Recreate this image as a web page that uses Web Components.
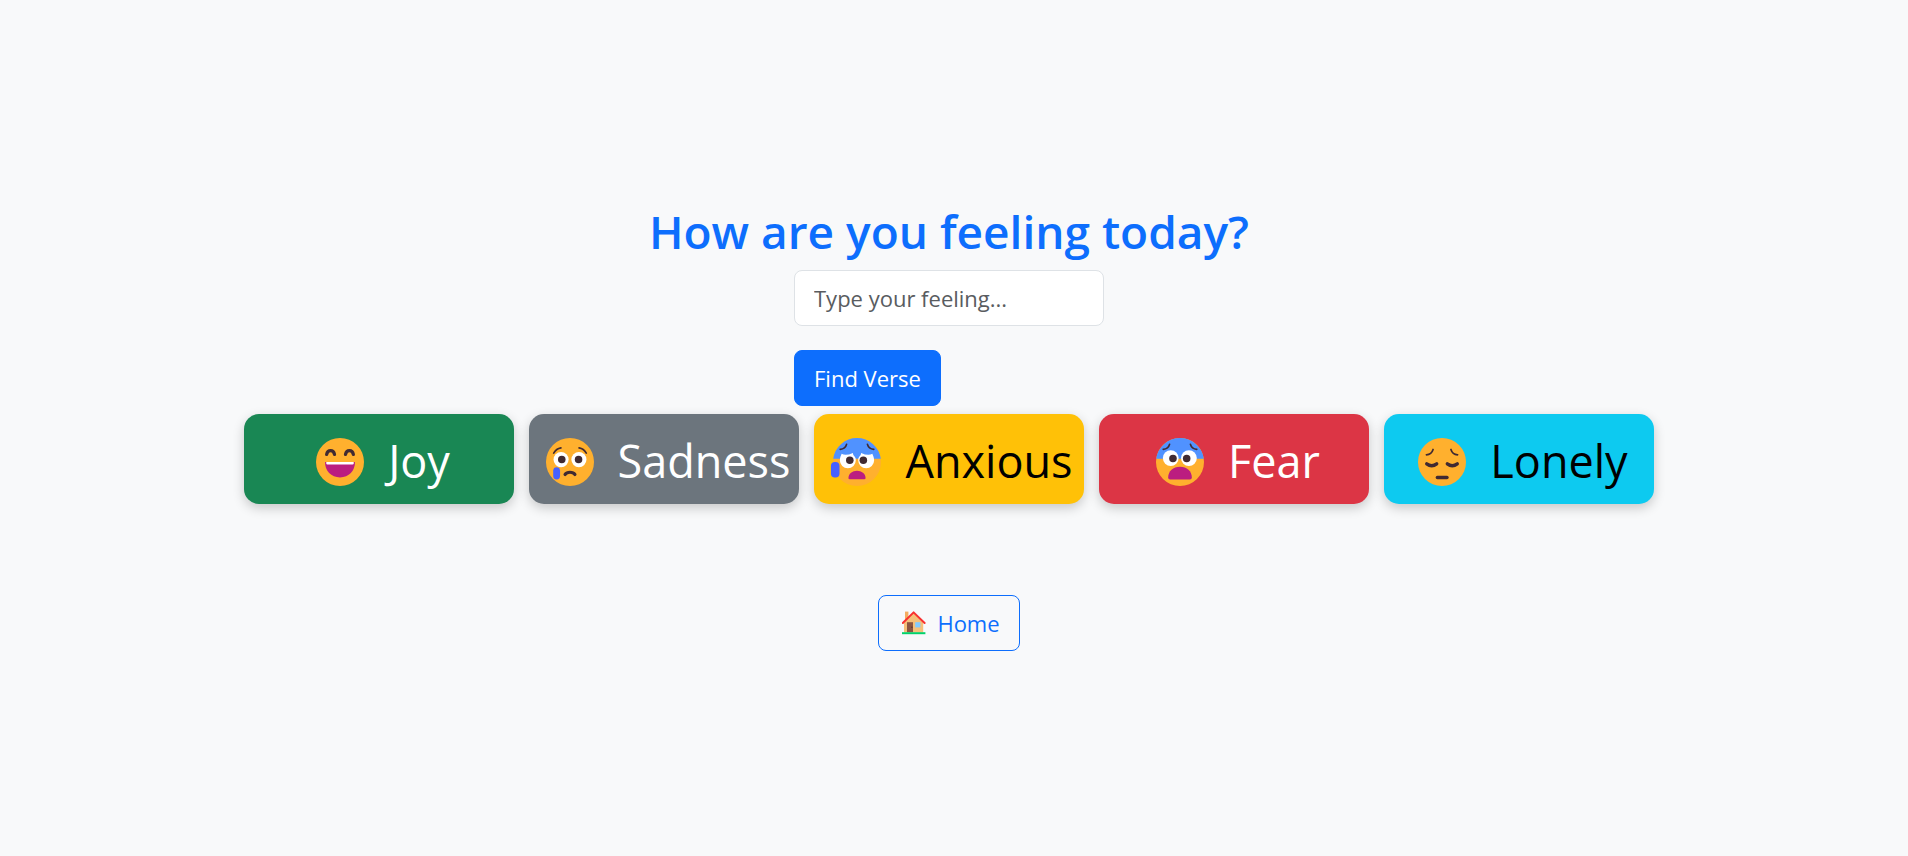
<!DOCTYPE html>
<html lang="en">
<head>
<meta charset="utf-8">
<meta name="viewport" content="width=device-width, initial-scale=1">
<title>How are you feeling today?</title>
<style>
  body {
    margin: 0;
    background: #f8f9fa;
    font-family: "Open Sans", "Noto Sans", sans-serif;
    font-size: 22px;
    line-height: 36px;
    color: #212529;
  }
</style>
</head>
<body>
<feeling-page>
  <feeling-form></feeling-form>
  <mood-list slot="moods">
    <mood-button mood="joy">Joy</mood-button>
    <mood-button mood="sadness">Sadness</mood-button>
    <mood-button mood="anxious">Anxious</mood-button>
    <mood-button mood="fear">Fear</mood-button>
    <mood-button mood="lonely">Lonely</mood-button>
  </mood-list>
  <home-link slot="footer">Home</home-link>
</feeling-page>

<script>
const define = (name, html, setup) => {
  const template = document.createElement('template');
  template.innerHTML = html;
  customElements.define(name, class extends HTMLElement {
    constructor() {
      super();
      this.attachShadow({ mode: 'open' }).append(template.content.cloneNode(true));
    }
    connectedCallback() { if (setup) setup(this, this.shadowRoot); }
  });
};

define('feeling-page', `
  <style>
    :host { display: block; }
    main {
      box-sizing: border-box;
      min-height: 100vh;
      padding-right: 10px;
      display: flex;
      flex-direction: column;
      align-items: center;
      justify-content: center;
    }
    h1 {
      margin: 0 0 12px;
      font-size: 46px;
      line-height: 54px;
      font-weight: 600;
      color: #0d6efd;
      text-align: center;
    }
    .moods { margin: 8px 0 91px; }
    .footer { padding-bottom: 1px; }
  </style>
  <main>
    <h1>How are you feeling today?</h1>
    <slot></slot>
    <div class="moods"><slot name="moods"></slot></div>
    <div class="footer"><slot name="footer"></slot></div>
  </main>`);

define('feeling-form', `
  <style>
    :host { display: block; width: 310px; max-width: 100%; }
    form { display: flex; flex-direction: column; align-items: flex-start; gap: 24px; }
    input, button {
      box-sizing: border-box;
      height: 56px;
      margin: 0;
      padding: 0 19px;
      border: 1px solid #dee2e6;
      border-radius: 8px;
      font: inherit;
    }
    input { width: 100%; background: #fff; color: #212529; }
    input::placeholder { color: #595c5f; opacity: 1; }
    button { background: #0d6efd; border-color: #0d6efd; color: #fff; cursor: pointer; }
  </style>
  <form>
    <input type="text" name="feeling" placeholder="Type your feeling..." aria-label="Your feeling">
    <button type="submit">Find Verse</button>
  </form>`, (host, root) => {
  root.querySelector('form').addEventListener('submit', e => e.preventDefault());
});

define('mood-list', `
  <style>
    :host { display: flex; flex-wrap: wrap; justify-content: center; gap: 15px; }
  </style>
  <slot></slot>`);

const face = '<circle cx="16" cy="16" r="14" fill="#ffb02e"/>';
const cold = face + '<path d="M2.13 14.1A14 14 0 0 1 29.87 14.1z" fill="#5092ff"/>';
const line = (d, w) => `<path d="${d}" fill="none" stroke="#402a32" stroke-width="${w}" stroke-linecap="round"/>`;
const faces = {
  joy: face +
    line('M8.2 11.6C8.8 8.7 12.2 8.7 12.8 11.6M19.2 11.6C19.8 8.7 23.2 8.7 23.8 11.6', 1.9) +
    '<path d="M7.3 16h17.4c.2 5-3.6 9-8.7 9s-8.9-4-8.7-9z" fill="#bb1d80"/>' +
    '<path d="M8 16h16v.8q0 .7-.7.7H8.7q-.7 0-.7-.7z" fill="#fff"/>',
  sadness: face +
    line('M6.5 10.8Q8 8.2 10.7 7.8M21.3 7.8Q24 8.2 25.5 10.8', 1) +
    '<g fill="#fff"><circle cx="10.8" cy="14.6" r="4.4"/><circle cx="21.2" cy="14.6" r="4.4"/></g>' +
    '<g fill="#402a32"><circle cx="11.2" cy="14.6" r="2.2"/><circle cx="21" cy="14.6" r="2.2"/></g>' +
    line('M13.1 23.3C14.3 21.6 17.7 21.6 18.9 23.3', 1.8) +
    '<path d="M6.2 21Q6.3 19 8.2 19T10.2 21V24Q10.2 26.2 8.2 26.2T6.2 24z" fill="#4660ff"/>',
  anxious: cold +
    line('M6.2 8.6Q9.2 8.4 9.9 5.7M22.1 5.7Q22.8 8.4 25.8 8.6', 1) +
    '<path d="M6 15C6 13 7 11.7 7 11.2Q9.5 12.6 13.6 10.7Q13.6 12 14.7 13Q15.4 13.8 15.3 15A4.6 4.6 0 0 1 6 15zM26 15C26 13 25 11.7 25 11.2Q22.5 12.6 18.4 10.7Q18.4 12 17.3 13Q16.6 13.8 16.7 15A4.6 4.6 0 0 0 26 15z" fill="#fff"/>' +
    '<g fill="#402a32"><circle cx="11.8" cy="15" r="2.2"/><circle cx="19.7" cy="15" r="2.2"/></g>' +
    '<path d="M11 25.3C11 22.8 13.4 21.1 16 21.1S21 22.8 21 25.3Q21 26.1 20.2 26.1H11.8Q11 26.1 11 25.3z" fill="#bb1d80"/>' +
    '<rect x=".8" y="16" width="5" height="9" rx="2.3" fill="#4660ff"/>',
  fear: cold +
    line('M6.2 8.6Q9.2 8.4 9.9 5.7M22.1 5.7Q22.8 8.4 25.8 8.6', 1) +
    '<g fill="#fff"><circle cx="10.6" cy="13.7" r="4.6"/><circle cx="21.2" cy="13.7" r="4.6"/></g>' +
    '<g fill="#402a32"><circle cx="11.9" cy="14" r="2.2"/><circle cx="19.9" cy="14" r="2.2"/></g>' +
    '<path d="M9.1 25C9.1 21.3 12 18.7 16 18.7S22.9 21.3 22.9 25Q22.9 26.2 21.8 26.2H10.2Q9.1 26.2 9.1 25z" fill="#bb1d80"/>',
  lonely: face +
    line('M6.9 11.8Q9.9 11.6 10.8 8.7M21.2 8.7Q22.1 11.6 25.1 11.8', 1) +
    line('M7.1 17.1Q10 19.3 12.9 17.1M19.1 17.1Q22 19.3 24.9 17.1', 2) +
    line('M13.3 25H18.9', 2)
};

define('mood-button', `
  <style>
    :host { display: block; width: 270px; }
    :host([mood="joy"]) { --fill: #198754; --ink: #fff; }
    :host([mood="sadness"]) { --fill: #6c757d; --ink: #fff; }
    :host([mood="anxious"]) { --fill: #ffc107; --ink: #000; }
    :host([mood="fear"]) { --fill: #dc3545; --ink: #fff; }
    :host([mood="lonely"]) { --fill: #0dcaf0; --ink: #000; }
    button {
      box-sizing: border-box;
      width: 100%;
      height: 90px;
      margin: 0;
      padding: 6px 0 0 8px;
      border: 0;
      border-radius: 15px;
      display: flex;
      align-items: center;
      justify-content: center;
      gap: 24px;
      background: var(--fill);
      color: var(--ink);
      font: inherit;
      font-size: 45px;
      line-height: 60px;
      box-shadow: 0 4px 12px rgba(0, 0, 0, .2);
      cursor: pointer;
    }
    svg { width: 48px; height: 48px; flex: none; overflow: visible; }
    span { padding-bottom: 2px; }
  </style>
  <button type="button"><svg viewBox="2 2 28 28" aria-hidden="true"></svg><span><slot></slot></span></button>`,
(host, root) => {
  root.querySelector('svg').innerHTML = faces[host.getAttribute('mood')];
});

define('home-link', `
  <style>
    :host { display: block; }
    a {
      box-sizing: border-box;
      height: 56px;
      padding: 0 19px 0 23px;
      border: 1px solid #0d6efd;
      border-radius: 8px;
      display: flex;
      align-items: center;
      gap: 11px;
      color: #0d6efd;
      text-decoration: none;
    }
    svg { width: 24px; height: 24px; flex: none; }
  </style>
  <a href="#"><svg viewBox="0 0 24 24" aria-hidden="true">
    <path d="M3 .6h3.4V10H3z" fill="#f3ad61"/>
    <path d="M2 11L11.6 1.6 21.2 11V21.4H2z" fill="#f5c079"/>
    <path d="M.8 12L11.6 1.4 22.6 12" fill="none" stroke="#f8312f" stroke-width="2" stroke-linecap="round" stroke-linejoin="round"/>
    <path d="M5 11.2h6v10H5z" fill="#8b5541"/><circle cx="9.9" cy="16.3" r=".7" fill="#5b3328"/>
    <path d="M13.2 11.2h5.2v5.2h-5.2z" fill="#83cbff"/>
    <path d="M0 21.2h23.4v2H0z" fill="#00d26a"/>
  </svg><span><slot></slot></span></a>`);
</script>
</body>
</html>
